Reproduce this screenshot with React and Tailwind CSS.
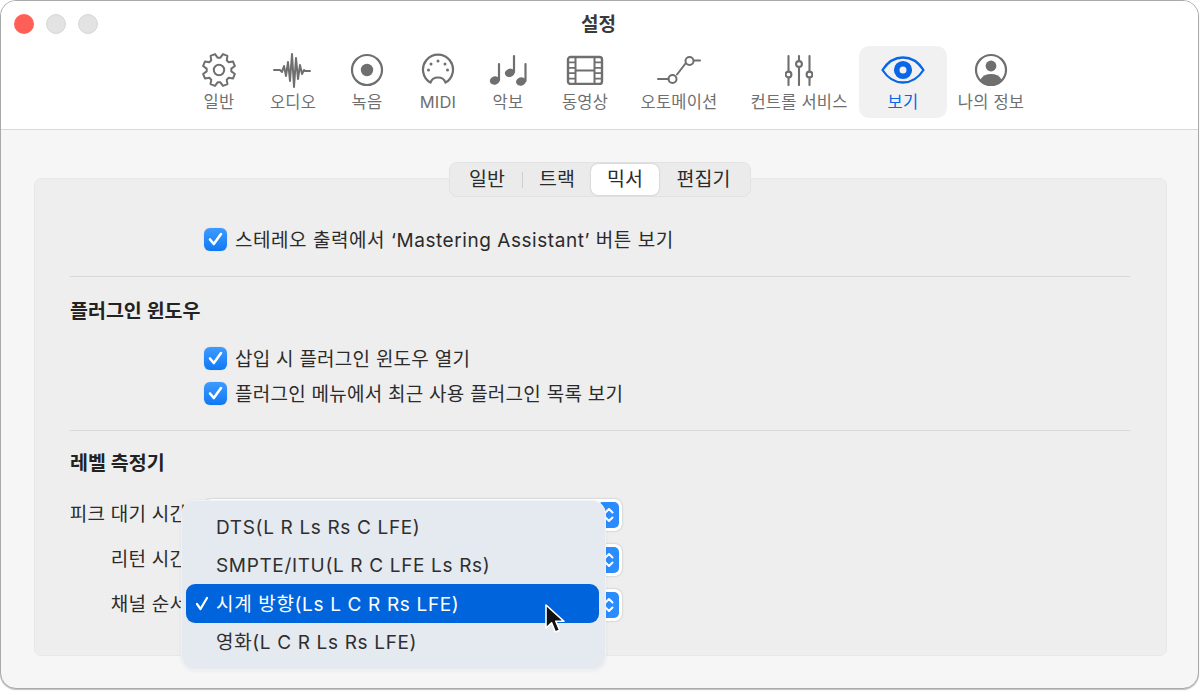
import React from "react";

const G = "#6f6f6f";

const gearPoints = (() => {
  const pts = [];
  const cx = 18, cy = 18, outer = 16.4, root = 12.4, n = 8;
  const at = (r, deg) => {
    const a = (deg * Math.PI) / 180;
    return `${(cx + r * Math.cos(a)).toFixed(2)},${(cy + r * Math.sin(a)).toFixed(2)}`;
  };
  for (let i = 0; i < n; i++) {
    const c = (360 / n) * i + 22.5;
    pts.push(at(root, c - 16), at(outer, c - 8.5), at(outer, c + 8.5), at(root, c + 16));
  }
  return pts.join(" ");
})();

const Gear = () => (
  <svg width="36" height="36" viewBox="0 0 36 36" fill="none" stroke={G} strokeWidth="2" strokeLinejoin="round">
    <polygon points={gearPoints} />
    <circle cx="18" cy="18" r="5.2" />
  </svg>
);
const Wave = () => (
  <svg width="40" height="36" viewBox="0 0 40 36" fill="none" stroke={G} strokeWidth="2" strokeLinecap="round" strokeLinejoin="round">
    <path d="M1 18h6l2 2 2-6 2 10 2-14 2 19 2-27 2 33 2-29 2 21 2-14 2 9 2-4 1 1h5" />
  </svg>
);
const Rec = () => (
  <svg width="34" height="34" viewBox="0 0 34 34" fill="none">
    <circle cx="17" cy="17" r="15" stroke={G} strokeWidth="2.2" />
    <circle cx="17" cy="17" r="6.2" fill={G} />
  </svg>
);
const Midi = () => (
  <svg width="34" height="34" viewBox="0 0 34 34" fill="none">
    <path d="M9.5 29.6A15 15 0 1 1 24.5 29.6C23.5 26.5 20.5 24.5 17 24.5S10.5 26.5 9.5 29.6Z" stroke={G} strokeWidth="2.2" strokeLinejoin="round" />
    <g fill={G}>
      <circle cx="7.5" cy="17" r="1.5" /><circle cx="10" cy="11" r="1.5" /><circle cx="17" cy="8" r="1.5" />
      <circle cx="24" cy="11" r="1.5" /><circle cx="26.5" cy="17" r="1.5" />
    </g>
  </svg>
);
const Notes = () => (
  <svg width="38" height="34" viewBox="0 0 38 34" fill={G}>
    <g stroke={G} strokeWidth="2.2" strokeLinecap="round">
      <path d="M10 11v16" /><path d="M25 3v16" /><path d="M36.5 11v17" />
    </g>
    <ellipse cx="5.8" cy="27.5" rx="5" ry="4.1" transform="rotate(-18 5.8 27.5)" />
    <ellipse cx="20.8" cy="19.8" rx="5" ry="4.1" transform="rotate(-18 20.8 19.8)" />
    <ellipse cx="32" cy="28.5" rx="5" ry="4.1" transform="rotate(-18 32 28.5)" />
  </svg>
);
const Film = () => (
  <svg width="38" height="30" viewBox="0 0 38 30" fill="none" stroke={G} strokeWidth="2">
    <rect x="2" y="2" width="34" height="27" rx="2.5" strokeWidth="2.4" />
    <path d="M9.5 2v27M28.5 2v27M9.5 15.5h19" />
    <path d="M2 7.4h7.5M2 12.8h7.5M2 18.2h7.5M2 23.6h7.5M28.5 7.4H36M28.5 12.8H36M28.5 18.2H36M28.5 23.6H36" strokeWidth="1.8" />
  </svg>
);
const Auto = () => (
  <svg width="44" height="28" viewBox="0 0 44 28" fill="none" stroke={G} strokeWidth="2" strokeLinecap="round">
    <path d="M1 23h10.5M20 18.5L28.5 7.5M37 4.5h6" />
    <circle cx="15.5" cy="23" r="4" />
    <circle cx="32.5" cy="5" r="4" />
  </svg>
);
const Sliders = () => (
  <svg width="28" height="32" viewBox="0 0 28 32" fill="none" stroke={G} strokeWidth="2.1" strokeLinecap="round">
    <path d="M3.5 2v15.5M3.5 24v7M14 2v4.5M14 13v18M24.5 2v15.5M24.5 24v7" />
    <circle cx="3.5" cy="20.5" r="2.9" />
    <circle cx="14" cy="10" r="2.9" />
    <circle cx="24.5" cy="20.5" r="2.9" />
  </svg>
);
const Eye = () => (
  <svg width="44" height="28" viewBox="0 0 44 28" fill="none">
    <path d="M1.5 14C7 5.5 14 1.5 22 1.5S37 5.5 42.5 14C37 22.5 30 26.5 22 26.5S7 22.5 1.5 14Z" stroke="#0a66e8" strokeWidth="2.3" strokeLinejoin="round" />
    <circle cx="22" cy="14" r="6.3" stroke="#0a66e8" strokeWidth="5.6" />
  </svg>
);
const Person = () => (
  <svg width="34" height="34" viewBox="0 0 34 34" fill="none">
    <circle cx="17" cy="17" r="15" stroke={G} strokeWidth="2.2" />
    <circle cx="17" cy="13" r="5.4" fill={G} />
    <path d="M6.5 26.5C8.5 22.8 12.5 21 17 21s8.5 1.8 10.5 5.5C24.8 29.8 21 31.8 17 31.8S9.2 29.8 6.5 26.5Z" fill={G} />
  </svg>
);

const tools = [
  { w: "w-[88px]", label: "일반", icon: <Gear /> },
  { w: "w-[60px]", label: "오디오", icon: <Wave /> },
  { w: "w-[88px]", label: "녹음", icon: <Rec /> },
  { w: "w-[54px]", label: "MIDI", icon: <Midi /> },
  { w: "w-[86px]", label: "악보", icon: <Notes /> },
  { w: "w-[68px]", label: "동영상", icon: <Film /> },
  { w: "w-[120px]", label: "오토메이션", icon: <Auto /> },
  { w: "w-[120px]", label: "컨트롤 서비스", icon: <Sliders /> },
  { w: "w-[88px]", label: "보기", icon: <Eye />, active: true },
  { w: "w-[88px]", label: "나의 정보", icon: <Person /> },
];

const Check = () => (
  <span className="flex h-[23px] w-[23px] shrink-0 items-center justify-center rounded-[6px] bg-gradient-to-b from-[#3d9bff] to-[#0b78f5] shadow-[0_0_1px_rgba(0,0,0,0.3)]">
    <svg width="15" height="14" viewBox="0 0 15 14" fill="none" stroke="white" strokeWidth="2.6" strokeLinecap="round" strokeLinejoin="round">
      <path d="M2 7.5L5.8 12L13 2" />
    </svg>
  </span>
);

const CheckRow = ({ children, className = "" }) => (
  <div className={`ml-[169px] flex items-center gap-[8px] ${className}`}>
    <Check />
    <span className="h-[24px] whitespace-nowrap pt-[2px] text-[19px] leading-[24px] text-[#2b2b2b]">{children}</span>
  </div>
);

const SelectRow = ({ label, className = "" }) => (
  <div className={`flex h-[32px] items-center ${className}`}>
    <span className="w-[158px] shrink-0 whitespace-nowrap text-right text-[19px] leading-[24px] tracking-[0.25px] text-[#2b2b2b]">{label}</span>
    <div className="ml-[11px] flex h-[32px] w-[418px] items-center justify-end rounded-[7px] bg-white p-[3px] shadow-[0_0_2px_rgba(0,0,0,0.3)]">
      <span className="flex h-[26px] w-[21px] items-center justify-center rounded-[5px] bg-[#2a8cff]">
        <svg width="12" height="18" viewBox="0 0 12 18" fill="none" stroke="white" strokeWidth="2" strokeLinecap="round" strokeLinejoin="round">
          <path d="M2.5 6.5L6 3l3.5 3.5M2.5 11.5L6 15l3.5-3.5" />
        </svg>
      </span>
    </div>
  </div>
);

const MenuItem = ({ children, selected, className = "" }) => (
  <div className={`flex h-[38.5px] items-center rounded-[9px] pl-[30px] pt-[3px] text-[19px] leading-[24px] tracking-[0.65px] ${selected ? "bg-[#0065dc] text-white" : "text-[#2f2f2f]"} ${className}`}>
    {children}
  </div>
);

export default function App() {
  return (
    <div className="h-[692px] w-[1202px] overflow-hidden bg-white" style={{ fontFamily: 'Inter, "Noto Sans CJK KR", sans-serif' }}>
      <div className="relative flex h-[689px] w-[1199px] flex-col overflow-hidden rounded-[16px] border border-[#a9a9a9] bg-[#f6f6f6] shadow-[0_1px_1px_rgba(0,0,0,0.25)]">
        <header className="h-[129px] shrink-0 border-b border-[#d9d9d9] bg-white">
          <div className="flex h-[45px] items-center px-[13px] pt-[3px]">
            <div className="mt-[-2px] flex items-center gap-[12px]">
              <span className="h-[20px] w-[20px] rounded-full bg-[#ff5f57]" />
              <span className="h-[20px] w-[20px] rounded-full border border-[#d6d6d6] bg-[#e3e3e3]" />
              <span className="h-[20px] w-[20px] rounded-full border border-[#d6d6d6] bg-[#e3e3e3]" />
            </div>
            <h1 className="ml-[-86px] flex-1 text-center text-[19px] font-semibold leading-[22px] text-[#3a3a3a]">설정</h1>
          </div>
          <nav className="flex pl-[174px]">
            {tools.map((t) => (
              <div key={t.label} className={`flex h-[72px] shrink-0 flex-col items-center rounded-[10px] ${t.w} ${t.active ? "bg-[#f1f1f1]" : ""}`}>
                <div className="flex h-[46px] items-center justify-center pt-[2px]">{t.icon}</div>
                <span className={`whitespace-nowrap text-[16.5px] leading-[20px] tracking-[0.2px] ${t.active ? "text-[#0a66e8]" : "text-[#6f6f6f]"}`}>{t.label}</span>
              </div>
            ))}
          </nav>
        </header>

        <main className="ml-[33px] mr-[31px] mt-[48px] h-[478px] rounded-[7px] border border-[#e8e8e8] bg-[#eeeeee]">
          <div className="relative z-10 ml-[414px] mt-[-17px] flex h-[35px] w-[302px] items-center rounded-[8px] border border-[#e2e2e2] bg-[#ebebeb] px-[2px] text-[19.5px] text-[#2b2b2b]">
            <span className="w-[70px] text-center">일반</span>
            <span className="h-[16px] w-px bg-[#cfcfcf]" />
            <span className="w-[68px] text-center">트랙</span>
            <span className="flex h-[31px] w-[68px] items-center justify-center rounded-[7px] bg-white shadow-[0_0_2px_rgba(0,0,0,0.25)]">믹서</span>
            <span className="flex-1 text-center">편집기</span>
          </div>

          <CheckRow className="mt-[30px] tracking-[0.55px]">스테레오 출력에서 ‘Mastering Assistant’ 버튼 보기</CheckRow>
          <div className="ml-[35px] mr-[36px] mt-[25px] h-px bg-[#d8d8d8]" />
          <h2 className="ml-[35px] mt-[22px] text-[19.5px] font-semibold leading-[24px] text-[#222]">플러그인 윈도우</h2>
          <CheckRow className="mt-[23px] tracking-[0.25px]">삽입 시 플러그인 윈도우 열기</CheckRow>
          <CheckRow className="mt-[11px] tracking-[0.25px]">플러그인 메뉴에서 최근 사용 플러그인 목록 보기</CheckRow>
          <div className="ml-[35px] mr-[36px] mt-[25px] h-px bg-[#d8d8d8]" />
          <h2 className="ml-[35px] mt-[20px] text-[19.5px] font-semibold leading-[24px] text-[#222]">레벨 측정기</h2>
          <SelectRow label="피크 대기 시간:" className="mt-[24px]" />
          <SelectRow label="리턴 시간:" className="mt-[13px]" />
          <SelectRow label="채널 순서:" className="mt-[13px]" />
        </main>

        <div className="absolute left-[180px] top-[499px] z-20 w-[425px] rounded-[14px] border border-[#eef1f6] bg-[#e5e9f0] pb-[8px] pl-[4px] pr-[6px] pt-[6px] shadow-[0_1px_4px_rgba(0,0,0,0.05)]">
          <MenuItem>DTS(L R Ls Rs C LFE)</MenuItem>
          <MenuItem>SMPTE/ITU(L R C LFE Ls Rs)</MenuItem>
          <MenuItem selected className="relative">
            <svg className="absolute left-[9px] top-[12px]" width="14" height="15" viewBox="0 0 14 15" fill="none" stroke="white" strokeWidth="2.2" strokeLinecap="round" strokeLinejoin="round">
              <path d="M2 8l3.5 5L12 2" />
            </svg>
            시계 방향(Ls L C R Rs LFE)
          </MenuItem>
          <MenuItem>영화(L C R Ls Rs LFE)</MenuItem>
        </div>

        <svg className="absolute left-[543px] top-[603px] z-30" width="22" height="32" viewBox="0 0 22 32">
          <path d="M2 1v23l5.6-5.2 3.7 9.2 4.3-1.8-3.8-8.9H20Z" fill="#111" stroke="white" strokeWidth="1.6" strokeLinejoin="round" />
        </svg>
      </div>
    </div>
  );
}
